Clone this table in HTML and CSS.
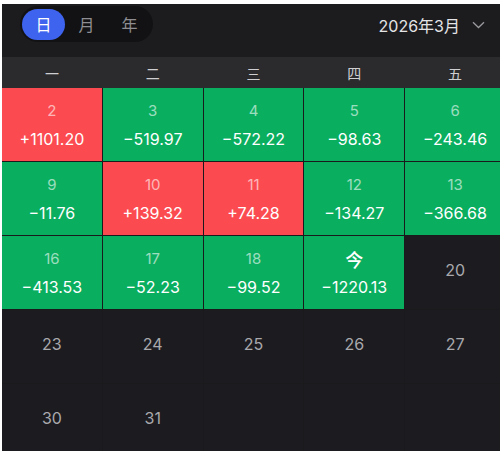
FILE: index.html
```html
<!DOCTYPE html>
<html lang="zh">
<head>
<meta charset="utf-8">
<title>日历</title>
<link rel="stylesheet" href="styles.css">
</head>
<body>
<div class="app">
  <header class="top">
    <div class="seg">
      <span class="seg-item active">日</span>
      <span class="seg-item">月</span>
      <span class="seg-item">年</span>
    </div>
    <div class="month">
      <span>2026年3月</span>
      <svg class="chev" width="13" height="8" viewBox="0 0 13 8"><path d="M1 1.2 L6.5 6.5 L12 1.2" fill="none" stroke="#9a9a9e" stroke-width="1.3"/></svg>
    </div>
  </header>
  <div class="weekdays">
    <span>一</span><span>二</span><span>三</span><span>四</span><span>五</span>
  </div>
  <div class="grid">
    <div class="cell up"><span class="num">2</span><span class="val">+1101.20</span></div>
    <div class="cell down"><span class="num">3</span><span class="val">−519.97</span></div>
    <div class="cell down"><span class="num">4</span><span class="val">−572.22</span></div>
    <div class="cell down"><span class="num">5</span><span class="val">−98.63</span></div>
    <div class="cell down"><span class="num">6</span><span class="val">−243.46</span></div>

    <div class="cell down"><span class="num">9</span><span class="val">−11.76</span></div>
    <div class="cell up"><span class="num">10</span><span class="val">+139.32</span></div>
    <div class="cell up"><span class="num">11</span><span class="val">+74.28</span></div>
    <div class="cell down"><span class="num">12</span><span class="val">−134.27</span></div>
    <div class="cell down"><span class="num">13</span><span class="val">−366.68</span></div>

    <div class="cell down"><span class="num">16</span><span class="val">−413.53</span></div>
    <div class="cell down"><span class="num">17</span><span class="val">−52.23</span></div>
    <div class="cell down"><span class="num">18</span><span class="val">−99.52</span></div>
    <div class="cell down"><span class="num today">今</span><span class="val">−1220.13</span></div>
    <div class="cell empty"><span class="dnum">20</span></div>

    <div class="cell empty"><span class="dnum">23</span></div>
    <div class="cell empty"><span class="dnum">24</span></div>
    <div class="cell empty"><span class="dnum">25</span></div>
    <div class="cell empty"><span class="dnum">26</span></div>
    <div class="cell empty"><span class="dnum">27</span></div>

    <div class="cell empty"><span class="dnum">30</span></div>
    <div class="cell empty"><span class="dnum">31</span></div>
    <div class="cell empty"></div>
    <div class="cell empty"></div>
    <div class="cell empty"></div>
  </div>
  <div class="home-bar"></div>
</div>
</body>
</html>
```

FILE: styles.css
```css
html, body {
  margin: 0;
  padding: 0;
  background: #ffffff;
  overflow: hidden;
  height: 451px;
}
body {
  padding: 4px 0 0 2px;
  box-sizing: border-box;
  font-family: Inter, "Noto Sans", "Noto Sans CJK SC", sans-serif;
  font-variant-numeric: proportional-nums;
}
.app {
  position: relative;
  width: 503px;
  height: 460px;
  background: #1c1c20;
}
.top {
  height: 53px;
  box-sizing: border-box;
  padding: 2px 20px 0 18px;
  display: flex;
  justify-content: space-between;
  align-items: flex-start;
  background: #1c1c1f;
}
.seg {
  display: flex;
  align-items: center;
  height: 36px;
  padding: 0 2px;
  border-radius: 18px;
  background: #121214;
}
.seg-item {
  width: 43px;
  height: 31px;
  display: flex;
  align-items: center;
  justify-content: center;
  border-radius: 16px;
  color: #8e8e92;
  font-family: "Noto Sans CJK SC", sans-serif;
  font-size: 16px;
}
.seg-item.active {
  background: #3d63ef;
  color: #ffffff;
}
.month {
  display: flex;
  align-items: center;
  height: 38px;
  color: #e4e4e6;
  font-size: 16px;
  font-family: Inter, "Noto Sans CJK SC", sans-serif;
}
.chev {
  margin-left: 12px;
}
.weekdays {
  height: 31px;
  display: grid;
  grid-template-columns: repeat(5, 1fr);
  column-gap: 1px;
  align-items: center;
  background: #2b2b2d;
  color: #cfcfd2;
  font-family: "Noto Sans CJK SC", sans-serif;
  font-size: 14px;
  text-align: center;
}
.grid {
  display: grid;
  grid-template-columns: repeat(5, 1fr);
  grid-auto-rows: 73px;
  gap: 1px;
  background: #1a1a1c;
}
.cell {
  display: flex;
  flex-direction: column;
  align-items: center;
  box-sizing: border-box;
  padding-top: 12px;
  color: #ffffff;
}
.cell.up { background: #fb4b50; }
.cell.down { background: #0aae5f; }
.cell.empty {
  background: #1c1c20;
  justify-content: center;
  padding: 0 0 6px 0;
}
.num {
  line-height: 22px;
  font-size: 15px;
  color: rgba(255, 255, 255, 0.6);
}
.num.today {
  color: #ffffff;
  font-family: "Noto Sans CJK SC", sans-serif;
  font-size: 18px;
  font-weight: 500;
}
.val {
  margin-top: 5px;
  line-height: 24px;
  font-size: 16px;
  color: #ffffff;
}
.dnum {
  font-size: 16px;
  color: #a9a9ad;
}
.home-bar {
  position: absolute;
  left: 163px;
  top: 447px;
  width: 178px;
  height: 5px;
  border-radius: 3px;
  background: #d6d6d8;
}
```
